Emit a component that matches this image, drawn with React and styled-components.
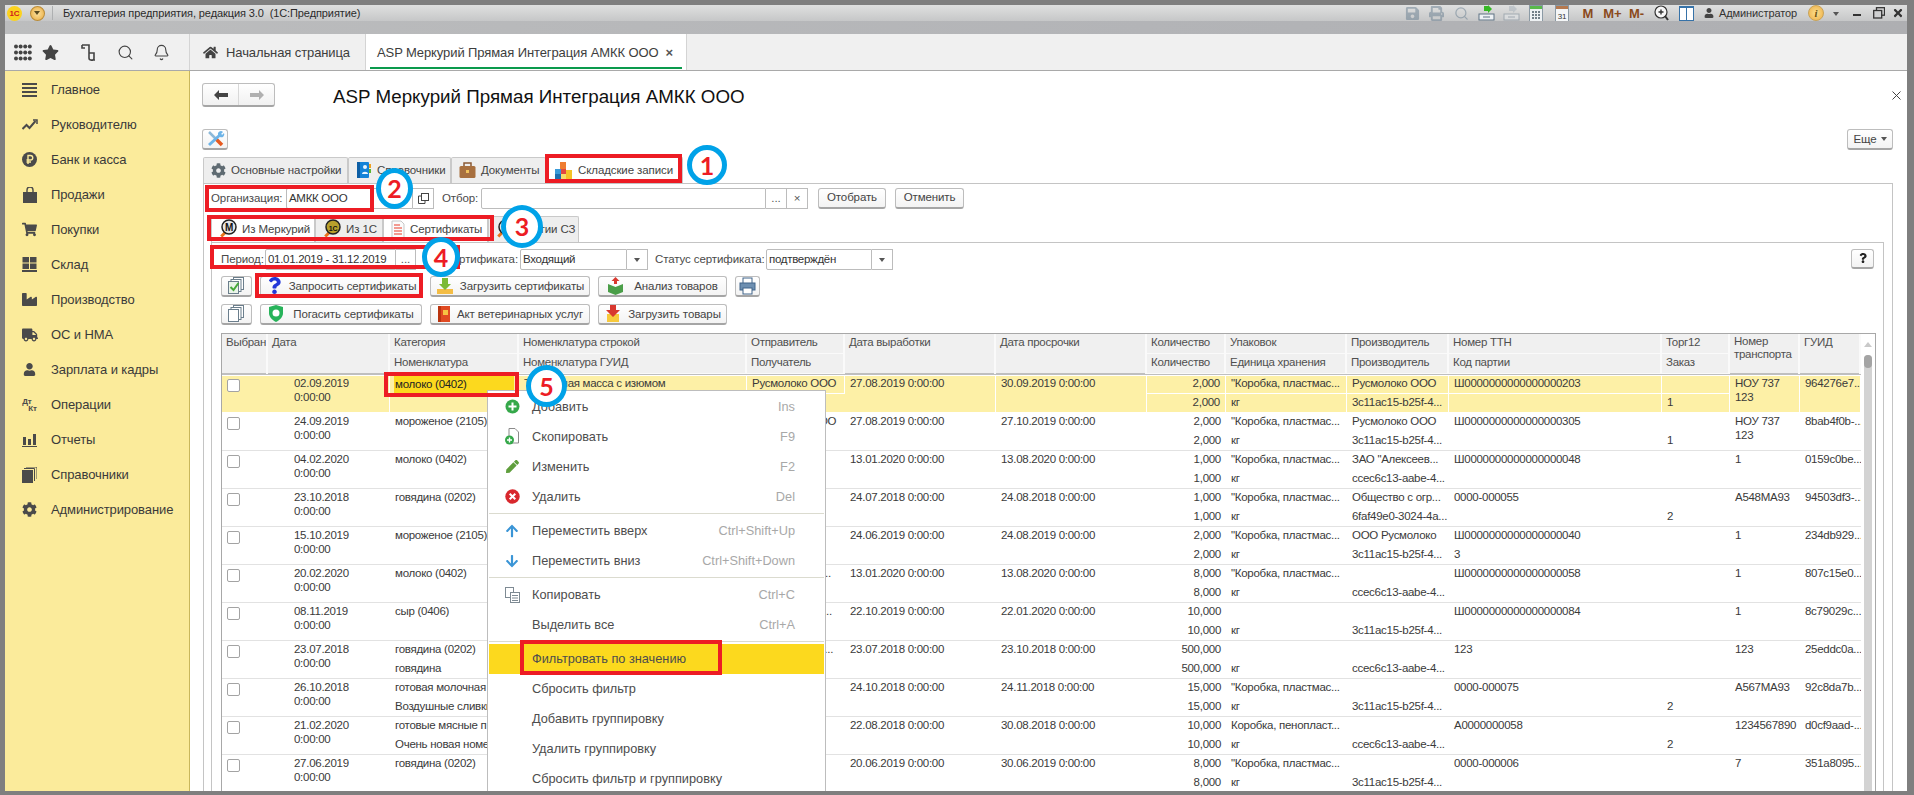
import React from 'react'
import styled, { createGlobalStyle } from 'styled-components'
import {
  FaStar, FaHome, FaCog, FaShoppingCart, FaIndustry, FaTruck, FaUser,
  FaSave, FaPrint, FaTimes, FaPen, FaArrowUp, FaArrowDown, FaQuestion,
} from 'react-icons/fa'
import { Search, Bell } from 'lucide-react'

const GlobalStyle = createGlobalStyle`
  html, body { margin: 0; padding: 0; background: #7f7f7f; }
  * { box-sizing: border-box; }
  body { font-family: "Liberation Sans", Arial, sans-serif; font-size: 11.5px; letter-spacing: -0.1px; color: #3c3c3c; }
`

const COLS = '46px 122px 129px 228px 98px 151px 151px 79px 121px 102px 213px 68px 70px 61px'

const Frame = styled.div`
  position: relative;
  width: 1914px;
  height: 795px;
  overflow: hidden;
  background: #7f7f7f;
  padding: 5px 7px 4px 5px;
  display: flex;
  flex-direction: column;
`
const TitleBar = styled.div`
  height: 16px;
  flex: none;
  display: flex;
  align-items: center;
  background: linear-gradient(#dfe0e0, #c6c7c8);
`
const Logo = styled.div`
  width: 15px;
  height: 15px;
  margin-left: 2px;
  border-radius: 50%;
  background: #fbd21f;
  color: #d0201c;
  font-size: 8px;
  font-weight: 700;
  line-height: 15px;
  text-align: center;
`
const DropRound = styled.div`
  width: 15px;
  height: 15px;
  margin-left: 8px;
  border-radius: 50%;
  background: radial-gradient(#fce2a0, #e8a93c);
  border: 1px solid #b98b37;
  display: flex;
  align-items: center;
  justify-content: center;
  &::after {
    content: '';
    border: 3px solid transparent;
    border-top: 4px solid #5a4a20;
    margin-top: 3px;
  }
`
const TitleSep = styled.div`
  width: 1px;
  height: 14px;
  margin: 0 10px 0 7px;
  background: #aeb0b1;
`
const AppTitle = styled.div`
  font-size: 11px;
  color: #2b2b2b;
  white-space: pre;
  width: 1339px;
  padding-bottom: 1px;
`
const Slot = styled.div`
  width: ${(p) => p.$w}px;
  flex: none;
  display: flex;
  align-items: center;
  justify-content: center;
  color: ${(p) => p.$color || '#555'};
  font-weight: ${(p) => (p.$bold ? 700 : 400)};
  font-size: ${(p) => (p.$bold ? '13px' : '12px')};
  opacity: ${(p) => (p.$dim ? 0.45 : 1)};
`
const UserName = styled.div`
  width: 81px;
  flex: none;
  font-size: 11px;
  color: #333;
  padding-bottom: 1px;
`
const InfoRound = styled.div`
  width: 16px;
  height: 16px;
  margin: 0 2px 0 8px;
  flex: none;
  border-radius: 50%;
  background: radial-gradient(#fbe08e, #eead45);
  border: 1px solid #c9a356;
  color: #6b5212;
  font: italic 700 11px/14px "Liberation Serif", serif;
  text-align: center;
`
const GrayBand = styled.div`
  height: 13px;
  flex: none;
  background: linear-gradient(90deg, #bcbdbe, #b3b4b7 60%, #aeafb2);
`
const TopBar = styled.div`
  height: 37px;
  flex: none;
  display: flex;
  background: #f0f0f0;
  border-bottom: 1px solid #a9a9a9;
`
const NavIcons = styled.div`
  width: 185px;
  flex: none;
  display: grid;
  grid-template-columns: 18px 37px 38px 36px 37px;
  justify-items: center;
  align-items: center;
  padding-left: 9px;
  color: #444;
  border-right: 1px solid #d4d4d4;
`
const TabStrip = styled.div`
  display: flex;
  height: 36px;
  font-size: 13px;
  color: #3d3d3d;
`
const TopTab = styled.div`
  position: relative;
  height: 36px;
  width: ${(p) => p.$w}px;
  display: flex;
  align-items: center;
  padding-left: ${(p) => p.$pad}px;
  gap: 8px;
  border-right: 1px solid #d4d4d4;
  background: ${(p) => (p.$active ? '#fff' : 'transparent')};
  &::after {
    content: '';
    display: ${(p) => (p.$active ? 'block' : 'none')};
    position: absolute;
    left: 4px;
    right: 4px;
    bottom: 1px;
    height: 2px;
    background: #0a9a4c;
  }
`
const TabClose = styled.span`
  font-size: 13px;
  font-weight: 700;
  color: #555;
  margin-left: -1px;
`
const Body = styled.div`
  flex: 1;
  min-height: 0;
  display: flex;
`
const Sidebar = styled.div`
  width: 185px;
  flex: none;
  padding-top: 1px;
  background: #fbeb9b;
  border-right: 1px solid #c9b75c;
`
const SideItem = styled.div`
  height: 35px;
  display: flex;
  align-items: center;
  font-size: 13px;
  color: #3a3a3a;
`
const SideIcon = styled.div`
  width: 46px;
  flex: none;
  display: flex;
  justify-content: center;
  padding-left: 3px;
  color: #4a4a4a;
`
const DtKt = styled.span`
  font-size: 8px;
  font-weight: 700;
  line-height: 7px;
  color: #4a4a4a;
  display: flex;
  flex-direction: column;
  span + span { margin-left: 6px; }
`
const Main = styled.div`
  flex: 1;
  min-width: 0;
  background: #fff;
  display: flex;
  flex-direction: column;
  overflow: hidden;
`
const HeaderRow = styled.div`
  height: 24px;
  margin-top: 12px;
  padding: 0 6px 0 12px;
  display: flex;
  align-items: center;
  flex: none;
`
const NavButtons = styled.div`
  width: 73px;
  height: 24px;
  display: flex;
  border: 1px solid #bdbdbd;
  border-bottom: 2px solid #a5a5a5;
  border-radius: 3px;
  background: linear-gradient(#fff, #f1f1f1);
`
const NavButton = styled.div`
  flex: 1;
  display: flex;
  align-items: center;
  justify-content: center;
  color: ${(p) => (p.$off ? '#b0b0b0' : '#444')};
  & + & { border-left: 1px solid #d8d8d8; }
`
const PageTitle = styled.h1`
  margin: 0 0 0 58px;
  padding-top: 3px;
  font-size: 18.75px;
  font-weight: 400;
  letter-spacing: 0;
  color: #111;
`
const CloseMark = styled.div`
  margin-left: auto;
  color: #444;
  display: flex;
`
const ToolRow = styled.div`
  height: 21px;
  margin-top: 22px;
  padding: 0 14px 0 12px;
  display: flex;
  justify-content: space-between;
  flex: none;
`
const ToolButton = styled.div`
  width: ${(p) => p.$w || 26}px;
  height: ${(p) => p.$h || 21}px;
  padding-bottom: 1px;
  border: 1px solid #bdbdbd;
  border-bottom: 2px solid #a5a5a5;
  border-radius: 3px;
  background: linear-gradient(#fff, #f3f3f3);
  display: flex;
  align-items: center;
  justify-content: center;
  gap: ${(p) => p.$gap || 6}px;
  color: #444;
  white-space: nowrap;
  flex: none;
`
const Caret = styled.span`
  border: 3px solid transparent;
  border-top: 4px solid #555;
  margin-top: 4px;
`
const Tabs = styled.div`
  height: 26px;
  margin-top: 7px;
  padding-left: ${(p) => p.$pad}px;
  display: flex;
  flex: none;
`
const Tab = styled.div`
  width: ${(p) => p.$w}px;
  display: flex;
  align-items: center;
  gap: 5px;
  padding: 0 0 1px 7px;
  background: ${(p) => (p.$active ? '#fff' : '#eeeeee')};
  border: 1px solid #c9c9c9;
  border-bottom: none;
  border-radius: 2px 2px 0 0;
  color: #444;
  white-space: nowrap;
`
const OuterPage = styled.div`
  flex: 1;
  min-height: 0;
  margin: 0 14px 0 13px;
  padding-top: 3px;
  border: 1px solid #c4c4c4;
  border-bottom: none;
  display: flex;
  flex-direction: column;
`
const FormRow = styled.div`
  height: ${(p) => p.$h}px;
  padding-left: ${(p) => p.$pad}px;
  padding-right: ${(p) => p.$padRight || 0}px;
  display: flex;
  align-items: center;
  flex: none;
`
const FieldLabel = styled.div`
  width: ${(p) => p.$w}px;
  flex: none;
  white-space: nowrap;
  color: #4a4a4a;
  text-align: ${(p) => (p.$right ? 'right' : 'left')};
  overflow: hidden;
`
const Field = styled.div`
  width: ${(p) => p.$w}px;
  height: 21px;
  flex: none;
  display: flex;
  align-items: center;
  padding: 0 0 1px 2px;
  background: #fff;
  border: 1px solid #bcbcbc;
  border-radius: 2px 0 0 2px;
  color: #333;
  letter-spacing: -0.3px;
`
const FieldButton = styled.div`
  width: ${(p) => p.$w}px;
  height: 21px;
  flex: none;
  display: flex;
  align-items: center;
  justify-content: center;
  background: #fff;
  border: 1px solid #bcbcbc;
  border-left: none;
  color: #555;
  line-height: 21px;
`
const Gap = styled.div`
  width: ${(p) => p.$w}px;
  flex: none;
`
const InnerPage = styled.div`
  flex: 1;
  min-height: 0;
  margin: 0 8px 0 7px;
  padding-top: 6px;
  border: 1px solid #c4c4c4;
  border-bottom: none;
  display: flex;
  flex-direction: column;
`
const ButtonRow = styled.div`
  margin: 7px 0 0 9px;
  display: grid;
  grid-template-columns: 31px 162px 160px 129px 25px;
  column-gap: 8px;
  flex: none;
`
const TableBox = styled.div`
  flex: 1;
  min-height: 0;
  margin: 8px 7px 0 9px;
  border: 1px solid #a8a8a8;
  border-bottom: none;
  display: flex;
  overflow: hidden;
`
const TableBody = styled.div`
  width: 1639px;
  flex: none;
  letter-spacing: -0.28px;
`
const HeadGrid = styled.div`
  display: grid;
  grid-template-columns: ${COLS};
  grid-template-rows: 20px 20px;
  height: 41px;
  border-bottom: 2px solid #bfbfbf;
  background: #f0f0f0;
`
const HeadCell = styled.div`
  grid-column: ${(p) => p.$c};
  grid-row: ${(p) => p.$r} / span ${(p) => p.$span || 1};
  padding: 1px 0 0 4px;
  line-height: ${(p) => (p.$wrap ? '13px' : '14px')};
  color: #4f4f4f;
  border-right: 2px solid #fafafa;
  border-bottom: ${(p) => (p.$span ? 'none' : '1px solid #fafafa')};
  white-space: ${(p) => (p.$wrap ? 'normal' : 'nowrap')};
  overflow: hidden;
`
const Row = styled.div`
  display: grid;
  grid-template-columns: ${COLS};
  grid-template-rows: 19px 19px;
  height: 38px;
  border-bottom: 1px solid #e2e2e2;
  background: ${(p) => (p.$selected ? 'linear-gradient(#fdf0a6, #fdf0a6) 0 1px / 100% 36px no-repeat' : 'none')};
  ${(p) => (p.$selected ? 'border-bottom-color: #fff;' : '')}
`
const Cell = styled.div`
  grid-column: ${(p) => p.$c};
  grid-row: ${(p) => p.$r} / span ${(p) => p.$span || 1};
  padding: ${(p) => (p.$wrap ? '2px 0 0 5px' : p.$right ? '0 5px 0 0' : '0 0 0 5px')};
  line-height: ${(p) => (p.$wrap ? '13.5px' : '17px')};
  white-space: ${(p) => (p.$wrap ? 'normal' : 'nowrap')};
  text-align: ${(p) => (p.$right ? 'right' : 'left')};
  overflow: hidden;
  color: #3a3a3a;
  ${(p) => (p.$sel ? 'border-right: 1px solid #fff;' : '')}
  ${(p) => (p.$sel && !p.$span && p.$r === 1 ? 'border-bottom: 1px solid #fff;' : '')}
`
const DateCell = styled(Cell)`
  padding-left: 26px;
`
const ActiveValue = styled.div`
  background: #fcd91e;
  margin: 1px 4px 0 -1px;
  padding-left: 1px;
  height: 18px;
  line-height: 16px;
  color: #222;
`
const CheckBox = styled.div`
  grid-column: 1;
  grid-row: 1 / span 2;
  width: 13px;
  height: 13px;
  margin: 4px 0 0 5px;
  background: #fff;
  border: 1px solid #a3a3a3;
  border-radius: 2px;
`
const Scroll = styled.div`
  flex: 1;
  display: flex;
  flex-direction: column;
  align-items: center;
  padding-top: 8px;
`
const ScrollUp = styled.div`
  border: 4px solid transparent;
  border-bottom: 5px solid #c9c9c9;
  border-top: none;
  margin-bottom: 8px;
`
const ScrollTrack = styled.div`
  flex: 1;
  width: 8px;
  margin-top: 0;
  background: #d3d3d3;
  border-radius: 4px 4px 0 0;
`
const ScrollThumb = styled.div`
  height: 13px;
  background: #a4a4a4;
  border-radius: 4px;
`
const Menu = styled.div`
  position: absolute;
  left: 487px;
  top: 390px;
  width: 339px;
  height: 401px;
  padding: 1px 1px 0;
  overflow: hidden;
  background: #fff;
  border: 1px solid #bdbdbd;
  border-bottom: none;
  z-index: 2;
  font-size: 12.75px;
  letter-spacing: 0;
  color: #4d4d4d;
`
const MenuItem = styled.div`
  height: 30px;
  display: flex;
  align-items: center;
  padding: 0 29px 1px 0;
  background: ${(p) => (p.$hot ? '#fcd91e' : 'none')};
  color: #4d4d4d;
`
const MenuIcon = styled.div`
  width: 43px;
  flex: none;
  display: flex;
  justify-content: center;
  padding-left: 3px;
`
const Shortcut = styled.span`
  margin-left: auto;
  color: #a8a8a8;
`
const MenuSep = styled.div`
  height: 4px;
  padding-top: 1px;
  &::after {
    content: '';
    display: block;
    height: 1px;
    background: #dbdbcf;
  }
`
const Mark = styled.div`
  position: absolute;
  left: ${(p) => p.$x}px;
  top: ${(p) => p.$y}px;
  width: ${(p) => p.$w}px;
  height: ${(p) => p.$h}px;
  border: 4px solid #ed1c24;
  z-index: 3;
  pointer-events: none;
`
const Ring = styled.div`
  position: absolute;
  left: ${(p) => p.$x}px;
  top: ${(p) => p.$y}px;
  width: ${(p) => p.$w}px;
  height: ${(p) => p.$h}px;
  border: 5px solid #00a2e8;
  border-radius: 50%;
  background: #fff;
  color: #ed1c24;
  font: 700 25px/1 Lato, "Open Sans", sans-serif;
  display: flex;
  align-items: center;
  justify-content: center;
  z-index: 4;
`

const Gear = ({ size = 15, color = '#5f6b72' }) => <FaCog size={size} color={color} />
const BlueBook = () => (
  <svg width="16" height="18" viewBox="0 0 16 18">
    <rect x="1" y="1" width="12" height="16" rx="1" fill="#1583d8" />
    <rect x="1" y="1" width="3" height="16" fill="#0c5ea4" />
    <circle cx="9" cy="6" r="2" fill="#e9f5ff" />
    <path d="M6 13c0-3 6-3 6 0z" fill="#e9f5ff" />
    <rect x="13" y="3" width="2" height="4" fill="#f0a020" />
    <rect x="13" y="8" width="2" height="4" fill="#5cb531" />
  </svg>
)
const Briefcase = () => (
  <svg width="17" height="18" viewBox="0 0 17 18">
    <path d="M5 5V2h7v3" fill="none" stroke="#8a5a35" strokeWidth="1.5" />
    <rect x="0.5" y="5" width="16" height="12" rx="1.5" fill="#a8703f" />
    <rect x="7" y="9" width="3" height="3" fill="#f1c25c" />
  </svg>
)
const Blocks = () => (
  <svg width="19" height="19" viewBox="0 0 19 19">
    <rect x="6" y="1" width="6" height="7" fill="#ef7d31" />
    <rect x="1" y="8" width="6" height="5" fill="#3a9bd9" />
    <rect x="1" y="13" width="6" height="5" fill="#1e6fb0" />
    <rect x="7" y="8" width="5" height="5" fill="#e2473f" />
    <rect x="12" y="9" width="6" height="9" fill="#f4c326" />
    <rect x="7" y="13" width="5" height="5" fill="#f7db6b" />
  </svg>
)
const Badge = ({ children }) => (
  <svg width="18" height="20" viewBox="0 0 18 20">
    <rect x="1" y="14" width="6" height="3" transform="rotate(-45 4 15)" fill="#e8731c" />
    <circle cx="10" cy="8" r="7" fill={children === 'M' ? '#e5e5e5' : '#b8a02c'} stroke="#222" strokeWidth="1.5" />
    <text x="10" y="11.5" textAnchor="middle" fontSize={children === 'M' ? 10 : 7} fontWeight="700" fill="#111" fontFamily="Liberation Sans">{children}</text>
  </svg>
)
const CertDoc = () => (
  <svg width="14" height="19" viewBox="0 0 14 19">
    <path d="M1 1h9l3 3v14H1z" fill="#fbfbfb" stroke="#c7c7c7" />
    <path d="M3 5h6M3 8h8M3 11h8M3 14h8" stroke="#ef7b6d" strokeWidth="1.6" />
  </svg>
)
const Copies = ({ checked }) => (
  <svg width="17" height="17" viewBox="0 0 17 17">
    <rect x="5.5" y="0.5" width="10" height="12" fill="#fff" stroke="#6b7e8c" />
    <rect x="3" y="2.5" width="10" height="12" fill="#fff" stroke="#6b7e8c" />
    <rect x="0.5" y="4.5" width="10" height="12" fill={checked ? '#eaf4e8' : '#fff'} stroke="#6b7e8c" />
    {checked && <path d="M2.5 10l3 3 5-7" fill="none" stroke="#47a83a" strokeWidth="2" />}
  </svg>
)
const Shield = () => (
  <svg width="16" height="19" viewBox="0 0 16 19">
    <path d="M8 1l7 2v6c0 4-3 7-7 9-4-2-7-5-7-9V3z" fill="#27b35a" />
    <circle cx="8" cy="9" r="3.5" fill="#fff" />
  </svg>
)
const DownTray = () => (
  <svg width="18" height="18" viewBox="0 0 18 18">
    <rect x="1" y="12" width="16" height="5" fill="#f4bd45" />
    <path d="M6 1h6v6h3l-6 6-6-6h3z" fill="#7cba35" />
  </svg>
)
const BoxUp = () => (
  <svg width="17" height="18" viewBox="0 0 17 18">
    <path d="M8.5 0l4 4h-2.5v3h-3V4H4.500z" fill="#d8382f" />
    <path d="M1 7l7.500 3 7.500-3v8l-7.500 3-7.500-3z" fill="#4a9e48" />
  </svg>
)
const RedBook = () => (
  <svg width="14" height="18" viewBox="0 0 14 18">
    <rect x="1" y="1" width="12" height="16" fill="#e04a22" />
    <rect x="1" y="1" width="3" height="16" fill="#b9340f" />
    <rect x="6" y="5" width="5" height="5" fill="#f6c343" />
  </svg>
)
const DownBox = () => (
  <svg width="18" height="19" viewBox="0 0 18 19">
    <rect x="3" y="10" width="12" height="8" fill="#f7c93c" />
    <path d="M6 1h6v5h4l-7 7-7-7h4z" fill="#d8382f" />
  </svg>
)
const Printer = () => (
  <svg width="17" height="18" viewBox="0 0 17 18">
    <rect x="4" y="1" width="9" height="6" fill="#fff" stroke="#41648a" />
    <rect x="1" y="6" width="15" height="7" fill="#6d8fb1" stroke="#41648a" />
    <rect x="4" y="11" width="9" height="6" fill="#fff" stroke="#41648a" />
  </svg>
)
const Tools = () => (
  <svg width="19" height="18" viewBox="0 0 19 18" fill="none">
    <path d="M3 2l7 7" stroke="#8db9d8" strokeWidth="2.500" />
    <path d="M10 9l6 6" stroke="#e6591f" strokeWidth="3.500" />
    <path d="M15 4L3 15" stroke="#6db4e8" strokeWidth="3" />
    <path d="M12 5a3 3 0 0 1 5-3l-2 2 1 1 2-2a3 3 0 0 1-4 4z" fill="#6db4e8" />
  </svg>
)
const GridDots = () => (
  <svg width="18" height="17" viewBox="0 0 18 17" fill="#444">
    {[0, 1, 2, 3].flatMap((i) => [0, 1, 2].map((j) => <circle key={i + '-' + j} cx={2 + i * 4.6} cy={2.500 + j * 6} r="2" />))}
  </svg>
)
const Scrollish = () => (
  <svg width="15" height="18" viewBox="0 0 15 18" fill="none" stroke="#444" strokeWidth="1.6">
    <path d="M1 2h7v13a2 2 0 0 0 2 2h4M8 10h5v5a2 2 0 0 1-3 2M1 2v3h3" />
  </svg>
)
const ListBars = () => (
  <svg width="15" height="14" viewBox="0 0 15 14" fill="#4a4a4a">
    <rect y="0" width="15" height="2" /><rect y="4" width="15" height="2" /><rect y="8" width="15" height="2" /><rect y="12" width="15" height="2" />
  </svg>
)
const TrendUp = () => (
  <svg width="16" height="11" viewBox="0 0 16 11" fill="none" stroke="#4a4a4a" strokeWidth="2">
    <path d="M0.500 10l4-4 3 3 6-7" />
    <path d="M11 1h4v4" strokeWidth="1.500" />
  </svg>
)
const Bag = () => (
  <svg width="14" height="16" viewBox="0 0 14 16">
    <rect x="0" y="5" width="14" height="11" fill="#4a4a4a" />
    <path d="M4 8V3a3 3 0 0 1 6 0v5" fill="none" stroke="#4a4a4a" strokeWidth="1.400" />
  </svg>
)
const Panes = () => (
  <svg width="15" height="15" viewBox="0 0 15 15" fill="#4a4a4a">
    <rect x="0.500" y="0" width="6.500" height="5.500" /><rect x="8" y="0" width="6.500" height="5.500" />
    <rect x="0.500" y="6.500" width="6.500" height="5.500" /><rect x="8" y="6.500" width="6.500" height="5.500" />
    <rect x="0" y="13" width="15" height="2" />
  </svg>
)
const BarsChart = () => (
  <svg width="15" height="14" viewBox="0 0 15 14" fill="#4a4a4a">
    <rect x="1" y="4" width="3" height="8" /><rect x="6" y="6" width="3" height="6" /><rect x="11" y="1" width="3" height="11" /><rect y="13" width="15" height="1" />
  </svg>
)
const Stack = () => (
  <svg width="15" height="16" viewBox="0 0 15 16">
    <rect x="0" y="3" width="11" height="13" fill="#4a4a4a" />
    <path d="M2 1.500h10.500V14M4 0h11v12" fill="none" stroke="#4a4a4a" />
  </svg>
)
const Coin = () => (
  <svg width="15" height="15" viewBox="0 0 15 15">
    <circle cx="7.500" cy="7.500" r="7.500" fill="#4a4a4a" />
    <path d="M6 12V3.500h2.500a2 2 0 0 1 0 4.500H4.500M4.500 10H9" fill="none" stroke="#fbeb9b" strokeWidth="1.4" />
  </svg>
)
const LinkIcon = ({ dim }) => (
  <svg width="17" height="16" viewBox="0 0 17 16" opacity={dim ? 0.4 : 1}>
    <rect x="1" y="9" width="15" height="6" fill="#eef2f5" stroke="#5e7384" />
    <path d="M5 12h7" stroke="#5e7384" />
    <path d="M6 1h4v-1l4 4-4 4V6H6z" fill={dim ? '#9aa7b2' : '#35b824'} />
  </svg>
)
const Calc = () => (
  <svg width="14" height="17" viewBox="0 0 14 17">
    <rect x="0.500" y="0.500" width="13" height="16" fill="#eef1f3" stroke="#8b9aa5" />
    <rect x="1" y="1" width="12" height="3" fill="#59b94a" />
    <path d="M3 7h2M6 7h2M9 7h2M3 10h2M6 10h2M9 10h2M3 13h2M6 13h2M9 13h2" stroke="#4a5a66" strokeWidth="1.400" />
  </svg>
)
const Cal = () => (
  <svg width="14" height="17" viewBox="0 0 14 17">
    <rect x="0.500" y="0.500" width="13" height="16" fill="#f4f6f7" stroke="#8b9aa5" />
    <rect x="1" y="1" width="12" height="3" fill="#b5794f" />
    <text x="7" y="13.500" textAnchor="middle" fontSize="8" fill="#333" fontFamily="Liberation Sans">31</text>
  </svg>
)
const Zoom = () => (
  <svg width="15" height="16" viewBox="0 0 15 16" fill="none" stroke="#333">
    <circle cx="7" cy="7" r="6" fill="#f7f7f7" strokeWidth="1.200" />
    <path d="M4.500 7h5M7 4.500v5" strokeWidth="1.400" />
    <path d="M11 11l3 4" strokeWidth="2" />
  </svg>
)
const Panels = () => (
  <svg width="15" height="15" viewBox="0 0 15 15">
    <rect x="0.500" y="0.500" width="14" height="14" fill="#fff" stroke="#3672a8" />
    <path d="M7.500 0v15" stroke="#3672a8" />
    <rect x="0.500" y="0.500" width="14" height="1.500" fill="#3672a8" />
  </svg>
)
const Restore = () => (
  <svg width="12" height="12" viewBox="0 0 12 12" fill="none" stroke="#333" strokeWidth="1.300">
    <rect x="3.500" y="0.700" width="8" height="7.500" />
    <rect x="0.700" y="3.500" width="8" height="7.500" fill="#cfd0d1" />
  </svg>
)
const PlusRound = () => (
  <svg width="15" height="15" viewBox="0 0 15 15">
    <circle cx="7.500" cy="7.500" r="7" fill="#35a84a" />
    <path d="M3.500 7.500h8M7.500 3.500v8" stroke="#fff" strokeWidth="2" />
  </svg>
)
const DocPlus = () => (
  <svg width="14" height="17" viewBox="0 0 14 17">
    <path d="M4 .5h6l3.500 3.500v11H4z" fill="#fff" stroke="#8b8b8b" />
    <circle cx="4.500" cy="12" r="4.500" fill="#35a84a" />
    <path d="M2 12h5M4.500 9.500v5" stroke="#fff" strokeWidth="1.400" />
  </svg>
)
const RedCross = () => (
  <svg width="15" height="15" viewBox="0 0 15 15">
    <circle cx="7.500" cy="7.500" r="7.200" fill="#d8282d" />
    <path d="M4.700 4.700l5.600 5.600M10.300 4.700l-5.600 5.600" stroke="#fff" strokeWidth="2" />
  </svg>
)
const CopyDocs = () => (
  <svg width="15" height="16" viewBox="0 0 15 16" fill="#fff" stroke="#7e8a93">
    <rect x="0.500" y="0.500" width="8" height="10" />
    <rect x="5.500" y="5.500" width="9" height="10" />
    <path d="M7 8.500h6M7 11h6M7 13.500h6" />
  </svg>
)

const sideItems = [
  ['Главное', <ListBars />],
  ['Руководителю', <TrendUp />],
  ['Банк и касса', <Coin />],
  ['Продажи', <Bag />],
  ['Покупки', <FaShoppingCart size={15} />],
  ['Склад', <Panes />],
  ['Производство', <FaIndustry size={15} />],
  ['ОС и НМА', <FaTruck size={16} />],
  ['Зарплата и кадры', <FaUser size={13} />],
  ['Операции', <DtKt><span>Дт</span><span>Кт</span></DtKt>],
  ['Отчеты', <BarsChart />],
  ['Справочники', <Stack />],
  ['Администрирование', <FaCog size={15} />],
]

const headers = [
  [1, 'Выбран'], [2, 'Дата'], [3, 'Категория', 'Номенклатура'], [4, 'Номенклатура строкой', 'Номенклатура ГУИД'],
  [5, 'Отправитель', 'Получатель'], [6, 'Дата выработки'], [7, 'Дата просрочки'], [8, 'Количество', 'Количество'],
  [9, 'Упаковок', 'Единица хранения'], [10, 'Производитель', 'Производитель'], [11, 'Номер ТТН', 'Код партии'],
  [12, 'Торг12', 'Заказ'], [13, 'Номер транспорта'], [14, 'ГУИД'],
]

const PACK = '"Коробка, пластмас...'
const G1 = '3c11ac15-b25f-4...'
const G2 = 'ccec6c13-aabe-4...'
const rows = [
  { d: '02.09.2019', c1: 'молоко (0402)', n: 'Творожная масса с изюмом', s: 'Русмолоко ООО', v: '27.08.2019 0:00:00', p: '30.09.2019 0:00:00', q: '2,000', u: PACK, m1: 'Русмолоко ООО', m2: G1, t1: 'Ш0000000000000000203', z: '1', tr: 'НОУ 737 123', g: '964276e7...' },
  { d: '24.09.2019', c1: 'мороженое (2105)', s: 'Русмолоко ООО', v: '27.08.2019 0:00:00', p: '27.10.2019 0:00:00', q: '2,000', u: PACK, m1: 'Русмолоко ООО', m2: G1, t1: 'Ш0000000000000000305', z: '1', tr: 'НОУ 737 123', g: '8bab4f0b-...' },
  { d: '04.02.2020', c1: 'молоко (0402)', v: '13.01.2020 0:00:00', p: '13.08.2020 0:00:00', q: '1,000', u: PACK, m1: 'ЗАО "Алексеев...', m2: G2, t1: 'Ш0000000000000000048', tr: '1', g: '0159c0be...' },
  { d: '23.10.2018', c1: 'говядина (0202)', v: '24.07.2018 0:00:00', p: '24.08.2018 0:00:00', q: '1,000', u: PACK, m1: 'Общество с огр...', m2: '6faf49e0-3024-4a...', t1: '0000-000055', z: '2', tr: 'A548MA93', g: '94503df3-...' },
  { d: '15.10.2019', c1: 'мороженое (2105)', v: '24.06.2019 0:00:00', p: '24.08.2019 0:00:00', q: '2,000', u: PACK, m1: 'ООО Русмолоко', m2: G1, t1: 'Ш0000000000000000040', t2: '3', tr: '1', g: '234db929...' },
  { d: '20.02.2020', c1: 'молоко (0402)', s: 'Общество с К...', v: '13.01.2020 0:00:00', p: '13.08.2020 0:00:00', q: '8,000', u: PACK, m2: G2, t1: 'Ш0000000000000000058', tr: '1', g: '807c15e0...' },
  { d: '08.11.2019', c1: 'сыр (0406)', s: 'Общество с А...', v: '22.10.2019 0:00:00', p: '22.01.2020 0:00:00', q: '10,000', m2: G1, t1: 'Ш0000000000000000084', tr: '1', g: '8c79029c...' },
  { d: '23.07.2018', c1: 'говядина (0202)', c2: 'говядина', s: 'Общество с ог...', v: '23.07.2018 0:00:00', p: '23.10.2018 0:00:00', q: '500,000', m2: G2, t1: '123', tr: '123', g: '25eddc0a...' },
  { d: '26.10.2018', c1: 'готовая молочная', c2: 'Воздушные сливки', v: '24.10.2018 0:00:00', p: '24.11.2018 0:00:00', q: '15,000', u: PACK, m2: G1, t1: '0000-000075', z: '2', tr: 'A567MA93', g: '92c8da7b...' },
  { d: '21.02.2020', c1: 'готовые мясные п', c2: 'Очень новая номе', v: '22.08.2018 0:00:00', p: '30.08.2018 0:00:00', q: '10,000', u: 'Коробка, пенопласт...', m2: G2, t1: 'A0000000058', z: '2', tr: '1234567890', g: 'd0cf9aad-...' },
  { d: '27.06.2019', c1: 'говядина (0202)', v: '20.06.2019 0:00:00', p: '30.06.2019 0:00:00', q: '8,000', u: PACK, m2: G1, t1: '0000-000006', tr: '7', g: '351a8095...' },
]

const menuItems = [
  { t: 'Добавить', k: 'Ins', i: <PlusRound /> },
  { t: 'Скопировать', k: 'F9', i: <DocPlus /> },
  { t: 'Изменить', k: 'F2', i: <FaPen size={13} color="#5f9e3c" /> },
  { t: 'Удалить', k: 'Del', i: <RedCross /> },
  { sep: true },
  { t: 'Переместить вверх', k: 'Ctrl+Shift+Up', i: <FaArrowUp size={14} color="#3b95d6" /> },
  { t: 'Переместить вниз', k: 'Ctrl+Shift+Down', i: <FaArrowDown size={14} color="#3b95d6" /> },
  { sep: true },
  { t: 'Копировать', k: 'Ctrl+C', i: <CopyDocs /> },
  { t: 'Выделить все', k: 'Ctrl+A' },
  { sep: true },
  { t: 'Фильтровать по значению', hot: true },
  { t: 'Сбросить фильтр' },
  { t: 'Добавить группировку' },
  { t: 'Удалить группировку' },
  { t: 'Сбросить фильтр и группировку' },
]

const marks = [
  [545, 154, 137, 29], [205, 185, 169, 27], [207, 215, 287, 26],
  [210, 245, 250, 24], [255, 273, 168, 25], [384, 372, 135, 25], [520, 640, 202, 35],
]
const rings = [
  [687, 145, 40, 40, '1'], [376, 168, 37, 41, '2'], [501, 205, 42, 43, '3'],
  [422, 237, 38, 40, '4'], [526, 365, 41, 42, '5'],
]

const DataRow = ({ row, selected }) => {
  const sel = selected || undefined
  return (
    <Row $selected={selected}>
      <CheckBox />
      <DateCell $c={2} $r={1} $span={2} $wrap $sel={sel}>{row.d}<br />0:00:00</DateCell>
      <Cell $c={3} $r={1} $sel={sel}>{selected ? <ActiveValue>{row.c1}</ActiveValue> : row.c1}</Cell>
      <Cell $c={3} $r={2} $sel={sel}>{row.c2}</Cell>
      <Cell $c={4} $r={1} $sel={sel}>{row.n}</Cell>
      <Cell $c={5} $r={1} $sel={sel}>{row.s}</Cell>
      <Cell $c={6} $r={1} $span={2} $sel={sel}>{row.v}</Cell>
      <Cell $c={7} $r={1} $span={2} $sel={sel}>{row.p}</Cell>
      <Cell $c={8} $r={1} $right $sel={sel}>{row.q}</Cell>
      <Cell $c={8} $r={2} $right $sel={sel}>{row.q}</Cell>
      <Cell $c={9} $r={1} $sel={sel}>{row.u}</Cell>
      <Cell $c={9} $r={2} $sel={sel}>кг</Cell>
      <Cell $c={10} $r={1} $sel={sel}>{row.m1}</Cell>
      <Cell $c={10} $r={2} $sel={sel}>{row.m2}</Cell>
      <Cell $c={11} $r={1} $sel={sel}>{row.t1}</Cell>
      <Cell $c={11} $r={2} $sel={sel}>{row.t2}</Cell>
      <Cell $c={12} $r={1} $sel={sel} />
      <Cell $c={12} $r={2} $sel={sel}>{row.z}</Cell>
      <Cell $c={13} $r={1} $span={2} $wrap $sel={sel}>{row.tr}</Cell>
      <Cell $c={14} $r={1} $span={2} $sel={sel}>{row.g}</Cell>
    </Row>
  )
}

const App = () => {
  return (
    <Frame>
      <GlobalStyle />
      <TitleBar>
        <Logo>1С</Logo>
        <DropRound />
        <TitleSep />
        <AppTitle>Бухгалтерия предприятия, редакция 3.0  (1С:Предприятие)</AppTitle>
        <Slot $w={24} $dim><FaSave size={15} color="#5b7488" /></Slot>
        <Slot $w={24} $dim><FaPrint size={15} color="#5b7488" /></Slot>
        <Slot $w={25} $dim><Search size={15} color="#5b7488" /></Slot>
        <Slot $w={25}><LinkIcon /></Slot>
        <Slot $w={25}><LinkIcon dim /></Slot>
        <Slot $w={25}><Calc /></Slot>
        <Slot $w={26}><Cal /></Slot>
        <Slot $w={26} $bold $color="#8a4a1c">M</Slot>
        <Slot $w={23} $bold $color="#8a4a1c">M+</Slot>
        <Slot $w={25} $bold $color="#8a4a1c">M-</Slot>
        <Slot $w={26}><Zoom /></Slot>
        <Slot $w={24}><Panels /></Slot>
        <Slot $w={20}><FaUser size={10} color="#444" /></Slot>
        <UserName>Администратор</UserName>
        <InfoRound>i</InfoRound>
        <Slot $w={20}><Caret /></Slot>
        <Slot $w={22}><svg width="8" height="6" viewBox="0 0 8 6"><rect y="4" width="8" height="2" fill="#333" /></svg></Slot>
        <Slot $w={22}><Restore /></Slot>
        <Slot $w={17}><FaTimes size={12} color="#333" /></Slot>
      </TitleBar>
      <GrayBand />
      <TopBar>
        <NavIcons>
          <GridDots />
          <FaStar size={17} />
          <Scrollish />
          <Search size={17} strokeWidth={1.6} />
          <Bell size={17} strokeWidth={1.6} />
        </NavIcons>
        <TabStrip>
          <TopTab $w={176} $pad={13}><FaHome size={15} color="#444" />Начальная страница</TopTab>
          <TopTab $w={321} $pad={11} $active>ASP Меркурий Прямая Интеграция АМКК ООО<TabClose>×</TabClose></TopTab>
        </TabStrip>
      </TopBar>
      <Body>
        <Sidebar>
          {sideItems.map(([title, icon]) => (
            <SideItem key={title}><SideIcon>{icon}</SideIcon>{title}</SideItem>
          ))}
        </Sidebar>
        <Main>
          <HeaderRow>
            <NavButtons>
              <NavButton><svg width="14" height="10" viewBox="0 0 14 10" fill="currentColor"><path d="M0 5l5-5v3h9v4H5v3z" /></svg></NavButton>
              <NavButton $off><svg width="14" height="10" viewBox="0 0 14 10" fill="currentColor"><path d="M14 5L9 0v3H0v4h9v3z" /></svg></NavButton>
            </NavButtons>
            <PageTitle>ASP Меркурий Прямая Интеграция АМКК ООО</PageTitle>
            <CloseMark><svg width="9" height="9" viewBox="0 0 9 9" stroke="currentColor"><path d="M.5.5l8 8M8.500.500l-8 8" /></svg></CloseMark>
          </HeaderRow>
          <ToolRow>
            <ToolButton><Tools /></ToolButton>
            <ToolButton $w={46} $gap={4}>Еще<Caret /></ToolButton>
          </ToolRow>
          <Tabs $pad={13}>
            <Tab $w={145}><Gear />Основные настройки</Tab>
            <Tab $w={103}><BlueBook />Справочники</Tab>
            <Tab $w={95}><Briefcase />Документы</Tab>
            <Tab $w={137} $active><Blocks />Складские записи</Tab>
          </Tabs>
          <OuterPage>
            <FormRow $h={22} $pad={7}>
              <FieldLabel $w={75}>Организация:</FieldLabel>
              <Field $w={127}>АМКК ООО</Field>
              <FieldButton $w={21}><svg width="11" height="11" viewBox="0 0 11 11" fill="none" stroke="#444"><rect x="3.500" y=".5" width="7" height="7" /><path d="M3.500 3H.5v7.500H7V8" /></svg></FieldButton>
              <Gap $w={8} />
              <FieldLabel $w={39}>Отбор:</FieldLabel>
              <Field $w={285} />
              <FieldButton $w={21}>...</FieldButton>
              <FieldButton $w={21}>×</FieldButton>
              <Gap $w={10} />
              <ToolButton $w={68}>Отобрать</ToolButton>
              <Gap $w={9} />
              <ToolButton $w={69}>Отменить</ToolButton>
            </FormRow>
            <Tabs $pad={7}>
              <Tab $w={104} $active><Badge>M</Badge>Из Меркурий</Tab>
              <Tab $w={68}><Badge>1С</Badge>Из 1С</Tab>
              <Tab $w={105} $active><CertDoc />Сертификаты</Tab>
              <Tab $w={91}><Badge>M</Badge>Партии СЗ</Tab>
            </Tabs>
            <InnerPage>
              <FormRow $h={20} $pad={9} $padRight={10}>
                <FieldLabel $w={44}>Период:</FieldLabel>
                <Field $w={131}>01.01.2019 - 31.12.2019</Field>
                <FieldButton $w={20}>...</FieldButton>
                <FieldLabel $w={102} $right>Вид сертификата:</FieldLabel>
                <Gap $w={2} />
                <Field $w={107}>Входящий</Field>
                <FieldButton $w={21}><Caret /></FieldButton>
                <Gap $w={7} />
                <FieldLabel $w={111}>Статус сертификата:</FieldLabel>
                <Field $w={106}>подтверждён</Field>
                <FieldButton $w={21}><Caret /></FieldButton>
                <Gap $w={958} />
                <ToolButton $w={23} $h={20}><FaQuestion size={10} color="#222" /></ToolButton>
              </FormRow>
              <ButtonRow>
                <ToolButton $w={31}><Copies checked /></ToolButton>
                <ToolButton $w={162}><FaQuestion size={17} color="#2337d8" />Запросить сертификаты</ToolButton>
                <ToolButton $w={160}><DownTray />Загрузить сертификаты</ToolButton>
                <ToolButton $w={129} $gap={10}><BoxUp />Анализ товаров</ToolButton>
                <ToolButton $w={25}><Printer /></ToolButton>
              </ButtonRow>
              <ButtonRow>
                <ToolButton $w={31}><Copies /></ToolButton>
                <ToolButton $w={162} $gap={9}><Shield />Погасить сертификаты</ToolButton>
                <ToolButton $w={160}><RedBook />Акт ветеринарных услуг</ToolButton>
                <ToolButton $w={129}><DownBox />Загрузить товары</ToolButton>
              </ButtonRow>
              <TableBox>
                <TableBody>
                  <HeadGrid>
                    {headers.flatMap(([c, top, bottom]) => (bottom
                      ? [<HeadCell key={c + 't'} $c={c} $r={1}>{top}</HeadCell>, <HeadCell key={c + 'b'} $c={c} $r={2}>{bottom}</HeadCell>]
                      : [<HeadCell key={c} $c={c} $r={1} $span={2} $wrap={c === 13}>{top}</HeadCell>]))}
                  </HeadGrid>
                  {rows.map((row, i) => <DataRow key={row.d} row={row} selected={i === 0} />)}
                </TableBody>
                <Scroll>
                  <ScrollUp />
                  <ScrollTrack><ScrollThumb /></ScrollTrack>
                </Scroll>
              </TableBox>
            </InnerPage>
          </OuterPage>
        </Main>
      </Body>
      <Menu>
        {menuItems.map((item, i) => (item.sep
          ? <MenuSep key={i} />
          : (
            <MenuItem key={item.t} $hot={item.hot}>
              <MenuIcon>{item.i}</MenuIcon>
              {item.t}
              {item.k && <Shortcut>{item.k}</Shortcut>}
            </MenuItem>
          )))}
      </Menu>
      {marks.map(([x, y, w, h]) => <Mark key={x + '-' + y} $x={x} $y={y} $w={w} $h={h} />)}
      {rings.map(([x, y, w, h, n]) => <Ring key={n} $x={x} $y={y} $w={w} $h={h}>{n}</Ring>)}
    </Frame>
  )
}

export default App
